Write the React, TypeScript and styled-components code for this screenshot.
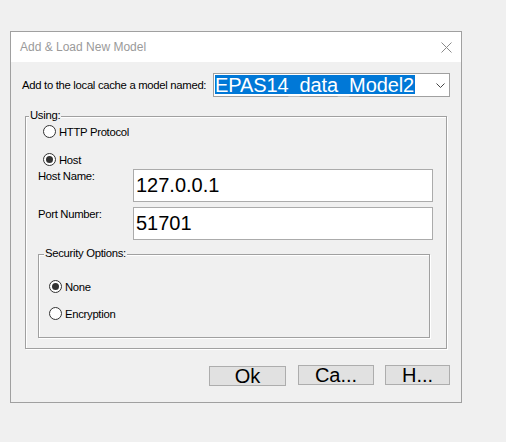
import React from "react";
import styled, { createGlobalStyle } from "styled-components";

const GlobalStyle = createGlobalStyle`
  html, body {
    margin: 0;
    padding: 0;
    background: #f0f0f0;
  }
  body {
    font-family: "Liberation Sans", Arial, sans-serif;
  }
`;

export default function App() {
  return (
    <>
      <GlobalStyle />
      <Page>
        <Window>
          <TitleBar>
            <Title>Add &amp; Load New Model</Title>
            <svg width="11" height="11" viewBox="0 0 11 11">
              <path d="M0.5 0.5 L10.5 10.5 M10.5 0.5 L0.5 10.5" stroke="#8a8a8a" strokeWidth="1" fill="none" />
            </svg>
          </TitleBar>

          <Body>
            <NameRow>
              <Label>Add to the local cache a model named:</Label>
              <Combo>
                <Selected>EPAS14_data_Model2</Selected>
                <svg width="9" height="5" viewBox="0 0 9 5">
                  <path d="M0.5 0.5 L4.5 4.5 L8.5 0.5" stroke="#444" strokeWidth="1" fill="none" />
                </svg>
              </Combo>
            </NameRow>

            <GroupBox $pad="8px 13px 10px 12px" $margin="19px 3px 0 3px">
              <Legend $left={3}>Using:</Legend>
              <RadioRow $indent={5}>
                <Radio />
                <span>HTTP Protocol</span>
              </RadioRow>
              <RadioRow $indent={5} $top={15}>
                <Radio $checked />
                <span>Host</span>
              </RadioRow>

              <Fields>
                <FieldLabel>Host Name:</FieldLabel>
                <TextBox>127.0.0.1</TextBox>
                <FieldLabel>Port Number:</FieldLabel>
                <TextBox>51701</TextBox>
              </Fields>

              <GroupBox $pad="25px 0 17px 10px" $margin="14px 3px 0 0">
                <Legend $left={5}>Security Options:</Legend>
                <RadioRow>
                  <Radio $checked />
                  <span>None</span>
                </RadioRow>
                <RadioRow $top={14}>
                  <Radio />
                  <span>Encryption</span>
                </RadioRow>
              </GroupBox>
            </GroupBox>

            <Buttons>
              <Button $w={77} $top={1} $gapAfter={12}>Ok</Button>
              <Button $w={76} $gapAfter={11}>Ca...</Button>
              <Button $w={65}>H...</Button>
            </Buttons>
          </Body>
        </Window>
      </Page>
    </>
  );
}

const Page = styled.div`
  padding: 31px 0 0 10px;
`;

const Window = styled.div`
  box-sizing: border-box;
  width: 452px;
  height: 372px;
  border: 1px solid #a0a0a0;
  background: #f0f0f0;
  display: flex;
  flex-direction: column;
`;

const TitleBar = styled.div`
  height: 30px;
  flex: none;
  background: #ffffff;
  display: flex;
  align-items: center;
  justify-content: space-between;
  padding: 0 9px;
`;

const Title = styled.span`
  font-size: 12px;
  color: #9a9a9a;
`;

const Body = styled.div`
  flex: 1;
  padding: 11px 11px 0 11px;
  display: flex;
  flex-direction: column;
`;

const NameRow = styled.div`
  display: flex;
  align-items: center;
  justify-content: space-between;
  height: 24px;
`;

const Label = styled.span`
  font-size: 11.3px;
  letter-spacing: -0.3px;
  color: #000;
`;

const Combo = styled.div`
  box-sizing: border-box;
  width: 237px;
  height: 24px;
  border: 1px solid #a0a0a0;
  background: #ffffff;
  display: flex;
  align-items: flex-start;
  justify-content: space-between;
  padding: 1px 4px 0 1px;

  svg {
    margin-top: 8px;
  }
`;

const Selected = styled.span`
  display: block;
  width: 200px;
  height: 19px;
  line-height: 21px;
  white-space: nowrap;
  background: #0078d7;
  color: #ffffff;
  font-size: 20px;
  letter-spacing: -0.1px;
`;

const GroupBox = styled.div<{ $pad: string; $margin: string }>`
  position: relative;
  border: 1px solid #a0a0a0;
  box-shadow: inset 1px 1px 0 #ffffff, 1px 1px 0 #ffffff;
  padding: ${(p) => p.$pad};
  margin: ${(p) => p.$margin};
  display: flex;
  flex-direction: column;
`;

const Legend = styled.span<{ $left: number }>`
  position: absolute;
  top: -8px;
  left: ${(p) => p.$left}px;
  padding: 0 1px;
  background: #f0f0f0;
  font-size: 11.3px;
  line-height: 13px;
  letter-spacing: -0.3px;
  color: #000;
`;

const RadioRow = styled.div<{ $indent?: number; $top?: number }>`
  display: flex;
  align-items: center;
  gap: 3px;
  height: 13px;
  margin-left: ${(p) => p.$indent ?? 0}px;
  margin-top: ${(p) => p.$top ?? 0}px;
  font-size: 11.3px;
  letter-spacing: -0.3px;
  color: #000;
`;

const Radio = styled.span<{ $checked?: boolean }>`
  box-sizing: border-box;
  width: 13px;
  height: 13px;
  border: 1px solid #333333;
  border-radius: 50%;
  background: #ffffff;
  display: flex;
  align-items: center;
  justify-content: center;
  &::after {
    content: "";
    width: 7px;
    height: 7px;
    border-radius: 50%;
    background: ${(p) => (p.$checked ? "#333333" : "transparent")};
  }
`;

const Fields = styled.div`
  display: grid;
  grid-template-columns: 95px 300px;
  row-gap: 5px;
  margin-top: 3px;
`;

const FieldLabel = styled.span`
  font-size: 11.3px;
  letter-spacing: -0.3px;
  line-height: 13px;
  padding-top: 1px;
  color: #000;
`;

const TextBox = styled.div`
  box-sizing: border-box;
  height: 33px;
  border: 1px solid #ababab;
  background: #ffffff;
  font-size: 20px;
  color: #000;
  display: flex;
  align-items: center;
  padding-left: 2px;
`;

const Buttons = styled.div`
  display: flex;
  justify-content: flex-end;
  align-items: flex-start;
  margin-top: 16px;
`;

const Button = styled.div<{ $w: number; $top?: number; $gapAfter?: number }>`
  box-sizing: border-box;
  width: ${(p) => p.$w}px;
  height: 20px;
  margin-top: ${(p) => p.$top ?? 0}px;
  margin-right: ${(p) => p.$gapAfter ?? 0}px;
  border: 1px solid #adadad;
  background: #e1e1e1;
  font-size: 20px;
  line-height: 18px;
  color: #000;
  display: flex;
  align-items: center;
  justify-content: center;
`;
